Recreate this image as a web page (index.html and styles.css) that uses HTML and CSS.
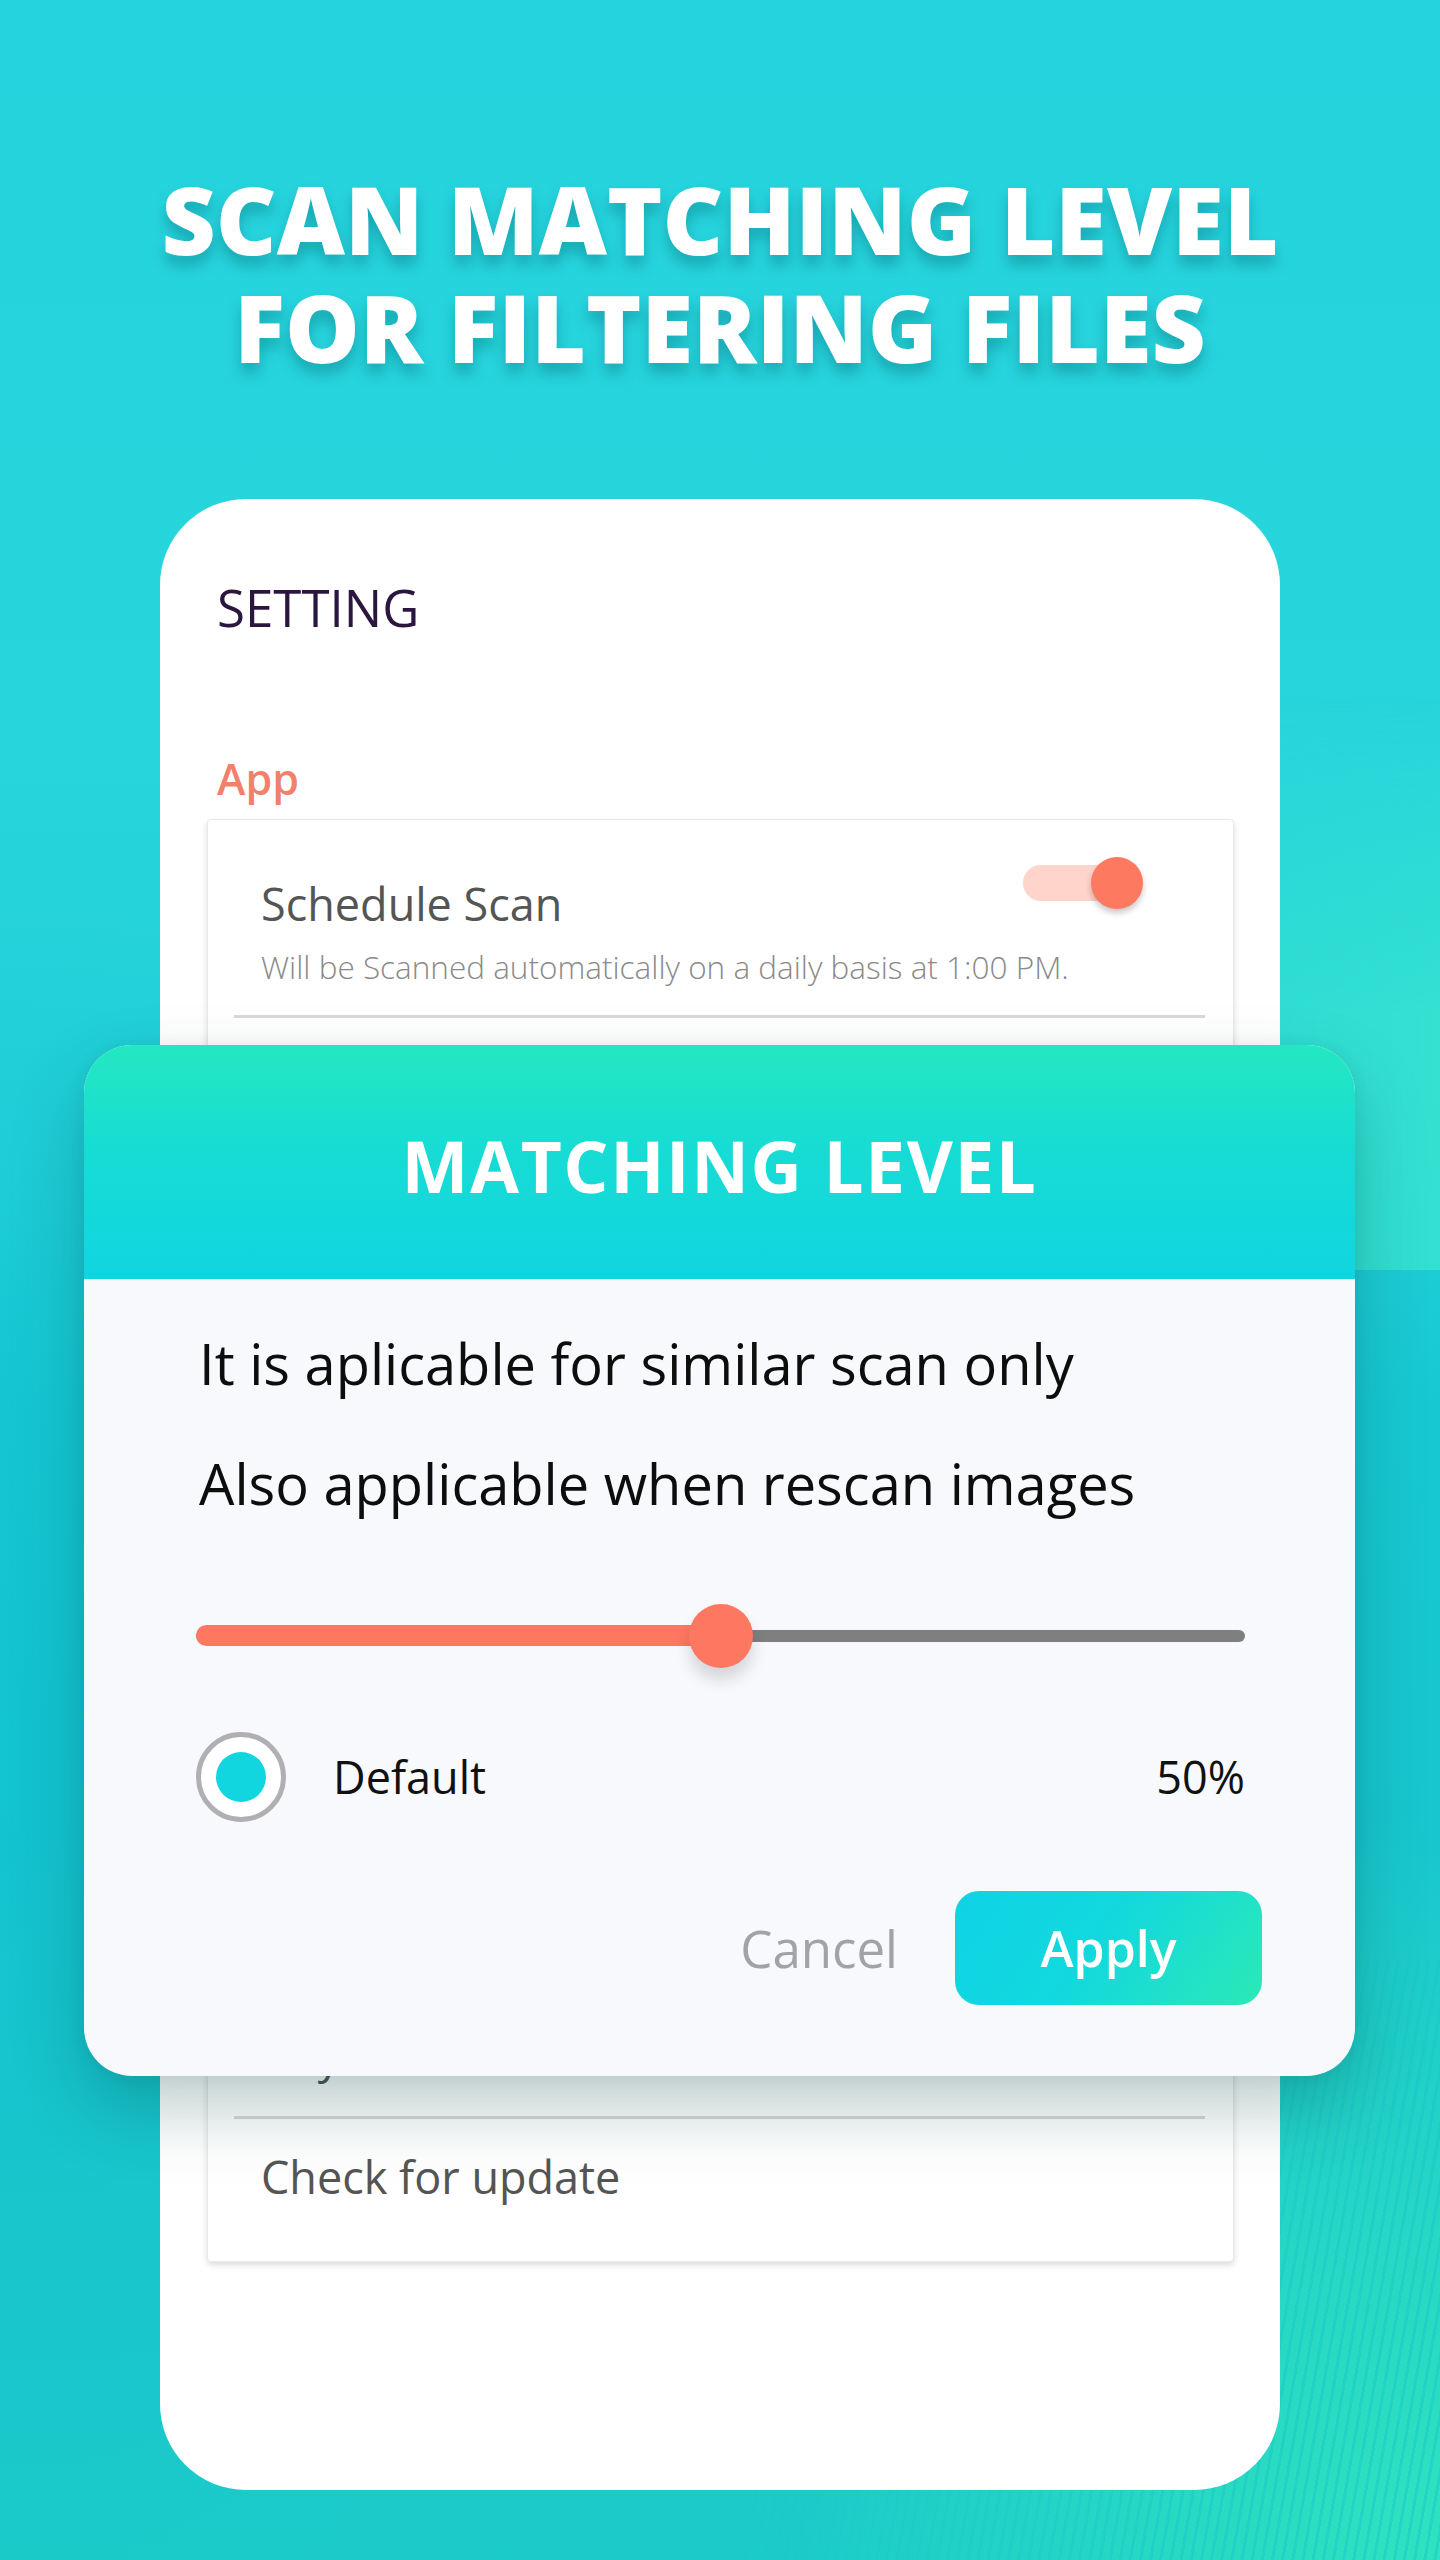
FILE: index.html
```html
<!DOCTYPE html>
<html lang="en">
<head>
<meta charset="utf-8">
<title>Scan Matching Level</title>
<link rel="stylesheet" href="styles.css">
</head>
<body>
<div class="page">
  <div class="bg-light"></div>
  <div class="bg-stripes"></div>
  <h1 class="headline">SCAN MATCHING LEVEL<br>FOR FILTERING FILES</h1>

  <div class="phone">
    <div class="phone-title">SETTING</div>
    <div class="section-label">App</div>

    <div class="settings-card">
      <div class="row row-first">
        <div class="row-head">
          <div class="row-title">Schedule Scan</div>
          <div class="toggle"><span class="toggle-track"></span><span class="toggle-thumb"></span></div>
        </div>
        <div class="row-sub">Will be Scanned automatically on a daily basis at 1:00 PM.</div>
      </div>
      <div class="divider"></div>

      <div class="row row-empty"></div>
      <div class="divider"></div>
      <div class="row row-empty"></div>
      <div class="divider"></div>
      <div class="row row-empty"></div>
      <div class="divider"></div>
      <div class="row row-empty"></div>
      <div class="divider"></div>
      <div class="row row-empty"></div>
      <div class="divider"></div>
      <div class="row row-empty row-empty-short"></div>
      <div class="divider"></div>
      <div class="row row-single row-last-hidden">
        <div class="row-title">Buy Premium</div>
      </div>
      <div class="divider"></div>
      <div class="row row-single row-check">
        <div class="row-title">Check for update</div>
      </div>
    </div>

    <div class="dialog">
      <div class="dialog-header">MATCHING LEVEL</div>
      <div class="dialog-body">
        <p class="dialog-line">It is aplicable for similar scan only</p>
        <p class="dialog-line">Also applicable when rescan images</p>

        <div class="slider">
          <span class="slider-track"></span>
          <span class="slider-fill" style="width: 50%"></span>
          <span class="slider-thumb" style="left: 50%"></span>
        </div>

        <div class="option-row">
          <span class="radio"><span class="radio-dot"></span></span>
          <span class="option-label">Default</span>
          <span class="option-value">50%</span>
        </div>

        <div class="actions">
          <span class="btn-cancel">Cancel</span>
          <span class="btn-apply">Apply</span>
        </div>
      </div>
    </div>
  </div>
</div>
</body>
</html>
```

FILE: styles.css
```css
* { box-sizing: border-box; }

html, body {
  margin: 0;
  padding: 0;
}

body {
  width: 1440px;
  height: 2560px;
  overflow: hidden;
  font-family: "Open Sans", "Noto Sans", sans-serif;
}

.page {
  position: relative;
  width: 1440px;
  height: 2560px;
  overflow: hidden;
  display: flex;
  flex-direction: column;
  align-items: center;
  background:
    radial-gradient(ellipse 650px 750px at 100% 100%, rgba(52, 230, 190, 0.85), rgba(52, 230, 190, 0) 100%),
    radial-gradient(ellipse 700px 900px at 0% 70%, rgba(10, 190, 210, 0.35), rgba(10, 190, 210, 0) 100%),
    linear-gradient(180deg, #25d3de 0%, #27d5dc 30%, #20cfd8 45%, #17c8d2 55%, #17c6cf 72%, #1cc8ca 88%, #1bcbc9 100%);
}

.bg-light {
  position: absolute;
  right: 0;
  top: 700px;
  width: 900px;
  height: 570px;
  background: linear-gradient(90deg, rgba(52, 224, 210, 0) 0%, rgba(52, 224, 210, 0.55) 60%, rgba(55, 228, 208, 0.85) 100%);
  -webkit-mask-image: linear-gradient(180deg, transparent 0%, #000 55%);
  mask-image: linear-gradient(180deg, transparent 0%, #000 55%);
  pointer-events: none;
}

.bg-stripes {
  position: absolute;
  right: 0;
  bottom: 0;
  width: 700px;
  height: 600px;
  background: repeating-linear-gradient(100deg, rgba(20, 200, 200, 0) 0 7px, rgba(20, 200, 200, 0.45) 7px 10px);
  -webkit-mask-image: linear-gradient(120deg, transparent 30%, #000 75%);
  mask-image: linear-gradient(120deg, transparent 30%, #000 75%);
  pointer-events: none;
}

.headline {
  position: relative;
  margin: 0;
  padding-top: 165px;
  font-family: "Open Sans", sans-serif;
  font-weight: 800;
  font-size: 94px;
  line-height: 108px;
  letter-spacing: 0;
  color: #ffffff;
  text-align: center;
  text-shadow: 0 10px 14px rgba(0, 90, 100, 0.35);
}

.phone {
  position: relative;
  margin-top: 118px;
  width: 1120px;
  height: 1991px;
  background: #ffffff;
  border-radius: 86px;
  padding: 78px 46px 0 47px;
}

.phone-title {
  margin-left: 10px;
  font-size: 51px;
  line-height: 60px;
  font-weight: 400;
  color: #2b1640;
}

.section-label {
  margin-top: 117px;
  margin-left: 10px;
  font-size: 43px;
  line-height: 50px;
  font-weight: 600;
  color: #f2806a;
}

.settings-card {
  margin-top: 15px;
  background: #ffffff;
  border: 1px solid #e8e8e8;
  border-radius: 4px;
  box-shadow: 0 3px 6px rgba(0, 0, 0, 0.14);
  display: flex;
  flex-direction: column;
}

.row {
  padding: 30px 90px 28px 53px;
  display: flex;
  flex-direction: column;
}

.row-first {
  padding-top: 57px;
  padding-bottom: 28px;
}

.row-empty {
  height: 168px;
  padding: 0;
}

.row-empty-short {
  height: 111px;
}

.row-head {
  display: flex;
  justify-content: space-between;
  align-items: flex-start;
}

.row-title {
  font-size: 45px;
  line-height: 54px;
  color: #555555;
  white-space: nowrap;
}

.row-sub {
  margin-top: 16px;
  font-size: 31.5px;
  line-height: 40px;
  font-weight: 300;
  color: #8a8a8a;
  white-space: nowrap;
}

.row-single {
  padding-bottom: 27px;
}

.row-last-hidden {
  padding-top: 42px;
  padding-bottom: 33px;
}

.row-check {
  padding-top: 31px;
  padding-bottom: 57px;
}

.divider {
  height: 3px;
  margin: 0 28px 0 26px;
  background: #d9d9d9;
}

.toggle {
  position: relative;
  width: 120px;
  height: 52px;
  margin-top: -20px;
  flex: none;
}

.toggle-track {
  position: absolute;
  left: 0;
  top: 8px;
  width: 106px;
  height: 36px;
  border-radius: 18px;
  background: #ffd4ca;
}

.toggle-thumb {
  position: absolute;
  right: 0;
  top: 0;
  width: 52px;
  height: 52px;
  border-radius: 50%;
  background: #fd7a60;
  box-shadow: 0 4px 6px rgba(0, 0, 0, 0.22);
}

.dialog {
  position: absolute;
  left: -76px;
  top: 546px;
  width: 1271px;
  border-radius: 48px;
  overflow: hidden;
  background: #f7f9fd;
  box-shadow: 0 34px 70px rgba(0, 60, 60, 0.26), 0 0 18px rgba(0, 0, 0, 0.06);
}

.dialog-header {
  height: 234px;
  padding-top: 6px;
  display: flex;
  align-items: center;
  justify-content: center;
  background: linear-gradient(180deg, #24e8c1 0%, #17dcd4 45%, #10d5e0 100%);
  color: #ffffff;
  font-size: 71px;
  line-height: 1;
  font-weight: 700;
  letter-spacing: 1.6px;
}

.dialog-body {
  padding: 24px 110px 71px 115px;
  display: flex;
  flex-direction: column;
}

.dialog-line {
  margin: 0;
  font-size: 56px;
  line-height: 120px;
  color: #0d0d0d;
  white-space: nowrap;
}

.slider {
  position: relative;
  margin-top: 61px;
  margin-left: -3px;
  height: 64px;
}

.slider-track {
  position: absolute;
  left: 0;
  right: 0;
  top: 26px;
  height: 12px;
  border-radius: 6px;
  background: #7f7f80;
}

.slider-fill {
  position: absolute;
  left: 0;
  top: 21px;
  height: 21px;
  border-radius: 11px;
  background: #fd7761;
}

.slider-thumb {
  position: absolute;
  top: 0;
  width: 64px;
  height: 64px;
  margin-left: -32px;
  border-radius: 50%;
  background: #fd7761;
  box-shadow: 0 12px 16px rgba(0, 0, 0, 0.14);
}

.option-row {
  margin-top: 64px;
  margin-left: -3px;
  height: 90px;
  display: flex;
  align-items: center;
}

.radio {
  width: 90px;
  height: 90px;
  border-radius: 50%;
  border: 5px solid #b0b0b4;
  background: #ffffff;
  display: flex;
  align-items: center;
  justify-content: center;
  flex: none;
}

.radio-dot {
  width: 50px;
  height: 50px;
  border-radius: 50%;
  background: #12d6df;
}

.option-label {
  margin-left: 47px;
  font-size: 45px;
  line-height: 60px;
  color: #111111;
}

.option-value {
  margin-left: auto;
  font-size: 45px;
  line-height: 60px;
  color: #111111;
}

.actions {
  margin-top: 69px;
  margin-right: -17px;
  display: flex;
  justify-content: flex-end;
  align-items: center;
}

.btn-cancel {
  font-size: 51px;
  line-height: 1;
  color: #a2a2a7;
  margin-right: 57px;
}

.btn-apply {
  width: 307px;
  height: 114px;
  border-radius: 24px;
  display: flex;
  align-items: center;
  justify-content: center;
  background: linear-gradient(125deg, #0fd3e6 0%, #12d8de 45%, #2be9b6 100%);
  color: #ffffff;
  font-size: 50px;
  line-height: 1;
  font-weight: 600;
}
```
